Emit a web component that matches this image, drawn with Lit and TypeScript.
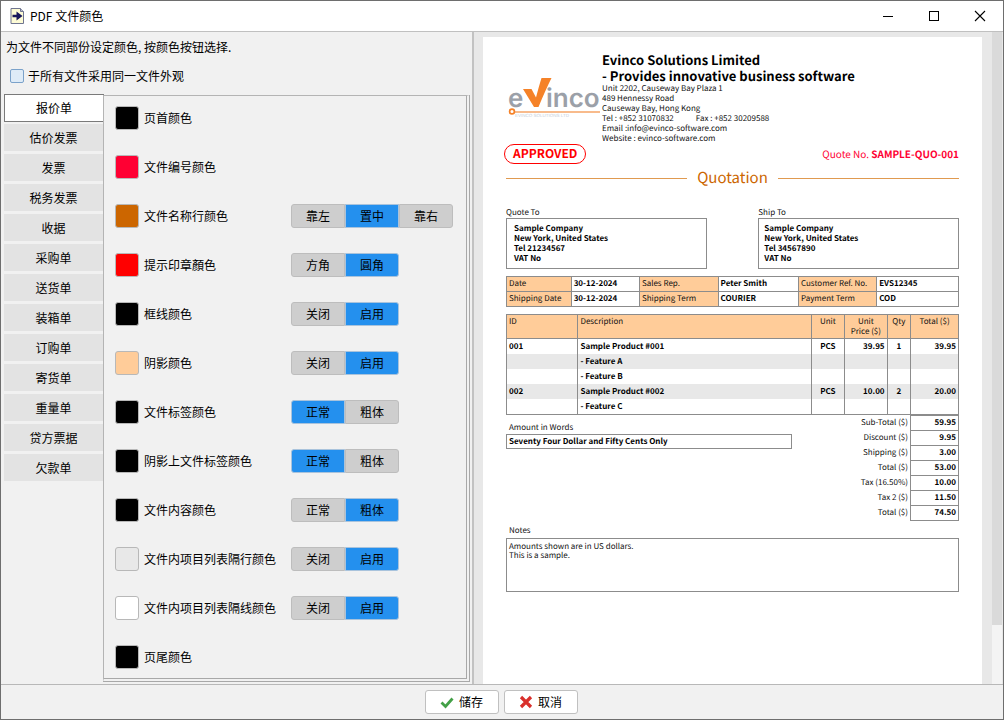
import { LitElement, html, css, svg } from "lit";
import { customElement, property, state } from "lit/decorators.js";

interface ColorRow {
  label: string;
  color: string;
  options?: string[];
  active?: number;
}

const DOCUMENT_TYPES = [
  "报价单", "估价发票", "发票", "税务发票", "收据", "采购单", "送货单",
  "装箱单", "订购单", "寄货单", "重量单", "贷方票据", "欠款单",
];

const COLOR_ROWS: ColorRow[] = [
  { label: "页首颜色", color: "#000000" },
  { label: "文件编号颜色", color: "#ff0033" },
  { label: "文件名称行颜色", color: "#cc6600", options: ["靠左", "置中", "靠右"], active: 1 },
  { label: "提示印章顏色", color: "#ff0000", options: ["方角", "圓角"], active: 1 },
  { label: "框线颜色", color: "#000000", options: ["关闭", "启用"], active: 1 },
  { label: "阴影颜色", color: "#ffcc99", options: ["关闭", "启用"], active: 1 },
  { label: "文件标签颜色", color: "#000000", options: ["正常", "粗体"], active: 0 },
  { label: "阴影上文件标签颜色", color: "#000000", options: ["正常", "粗体"], active: 0 },
  { label: "文件内容颜色", color: "#000000", options: ["正常", "粗体"], active: 1 },
  { label: "文件内项目列表隔行颜色", color: "#e8e8e8", options: ["关闭", "启用"], active: 1 },
  { label: "文件内项目列表隔线颜色", color: "#ffffff", options: ["关闭", "启用"], active: 1 },
  { label: "页尾颜色", color: "#000000" },
];

const ITEMS = [
  ["001", "Sample Product #001", "PCS", "39.95", "1", "39.95"],
  ["", "- Feature A", "", "", "", ""],
  ["", "- Feature B", "", "", "", ""],
  ["002", "Sample Product #002", "PCS", "10.00", "2", "20.00"],
  ["", "- Feature C", "", "", "", ""],
];

const TOTALS = [
  ["Sub-Total ($)", "59.95"],
  ["Discount ($)", "9.95"],
  ["Shipping ($)", "3.00"],
  ["Total ($)", "53.00"],
  ["Tax (16.50%)", "10.00"],
  ["Tax 2 ($)", "11.50"],
  ["Total ($)", "74.50"],
];

@customElement("quotation-preview")
class QuotationPreview extends LitElement {
  static styles = css`
    :host {
      display: block;
      background: #fff;
      color: #111;
      font: 8px/10px "Noto Sans CJK SC", sans-serif;
      text-rendering: geometricPrecision;
      padding: 15px 23px 0;
    }
    .head { display: flex; }
    .logo { width: 93px; height: 42px; margin: 24px 1px 0 2px; flex: none; }
    .company { flex: 1; white-space: nowrap; }
    .company h1 { margin: 0; font-size: 13px; line-height: 16px; font-weight: 700; color: #000; }
    .company p { margin: 0; }
    .fax { margin-left: 22px; }
    .stamp-row { display: flex; justify-content: space-between; align-items: center; height: 20px; }
    .stamp {
      box-sizing: border-box; height: 20px; border: 1px solid #f00; border-radius: 10px;
      padding: 0 8px; margin-left: -2px; color: #f00; font-size: 12px; line-height: 18px; font-weight: 700;
    }
    .number { color: #ff0033; font-size: 10px; line-height: 20px; }
    .title {
      display: flex; align-items: center; gap: 10px; margin: 4px 0 0;
      color: #cc6600; font-size: 15px; line-height: 20px; font-weight: 400;
    }
    .title::before, .title::after { content: ""; flex: 1; height: 1px; background: #e09a50; }
    .parties { display: flex; justify-content: space-between; margin-top: 20px; }
    .party { width: 44.3%; }
    .party-box {
      border: 1px solid #8c8c8c; box-sizing: border-box; height: 51px; padding: 5px 7px;
      font-weight: 700; color: #000;
    }
    .party:last-child .party-box { padding-left: 5px; }
    table { width: 100%; border-collapse: collapse; table-layout: fixed; }
    td, th { padding: 0 2px; font-weight: 400; text-align: left; vertical-align: top; white-space: nowrap; }
    .info { margin-top: 7px; }
    .info th, .info td { border: 1px solid #8c8c8c; line-height: 14px; height: 14px; }
    .info th, .items thead { background: #ffcc99; }
    td { font-weight: 700; color: #000; }
    .items { margin-top: 7px; }
    .items th { height: 21px; padding-top: 2px; border: 1px solid #8c8c8c; }
    .items td { border: 0 solid #8c8c8c; border-width: 0 1px; line-height: 15px; height: 15px; }
    .items tbody { border-bottom: 1px solid #8c8c8c; }
    .items tbody tr:nth-child(even) { background: #e8e8e8; }
    .items .mid { text-align: center; }
    .items .num, .totals td, .totals th { text-align: right; }
    .wrap { white-space: normal; }
    .summary { display: flex; justify-content: space-between; }
    .words { width: 63.2%; padding-top: 8px; }
    .caption { padding-left: 3px; }
    .words-box {
      border: 1px solid #8c8c8c; box-sizing: border-box; height: 15px; margin-top: 1px;
      padding-left: 2px; line-height: 13px; font-weight: 700; color: #000;
    }
    .totals { width: 30%; }
    .totals th, .totals td { line-height: 14px; height: 14px; }
    .totals td { border: 1px solid #8c8c8c; }
    .totals tr:first-child td { border-top: 0; }
    .notes { margin-top: 5px; }
    .notes-box {
      border: 1px solid #8c8c8c; box-sizing: border-box; height: 54px; margin-top: 2px;
      padding: 3px 2px; line-height: 9px;
    }
    .w1 { width: 14.3%; } .w2 { width: 15.1%; } .w3 { width: 17.4%; } .w4 { width: 17.8%; } .w5 { width: 17.3%; }
    .c1 { width: 15.8%; } .c3 { width: 7.4%; } .c4 { width: 9.4%; } .c5 { width: 5.2%; } .c6 { width: 10.6%; }
    .t2 { width: 48px; }
  `;

  private logo() {
    return svg`
      <svg class="logo" viewBox="0 0 93 42" role="img" aria-label="evinco">
        <g fill="#9ba0a8" font-family="Inter" font-size="26" font-weight="600">
          <text x="0" y="31">e</text>
          <text x="38" y="31">inco</text>
        </g>
        <path d="M15 13 H23.500 L28 21.500 Q31 10 33.500 2 H43.500 Q37.500 14 30.500 31 H26 Z" fill="#f58228"/>
        <path d="M5 36 H92" stroke="#f6a566" stroke-width="1.500"/>
        <circle cx="4" cy="35.500" r="2.400" fill="#fff" stroke="#f58228" stroke-width="1.700"/>
        <text x="7" y="40.500" font-family="Liberation Sans" font-size="4.500" fill="#c6cfdb">EVINCO SOLUTIONS LTD</text>
      </svg>`;
  }

  render() {
    return html`
      <div class="head">
        ${this.logo()}
        <div class="company">
          <h1>Evinco Solutions Limited<br>- Provides innovative business software</h1>
          <p>Unit 2202, Causeway Bay Plaza 1</p>
          <p>489 Hennessy Road</p>
          <p>Causeway Bay, Hong Kong</p>
          <p>Tel : +852 31070832<span class="fax">Fax : +852 30209588</span></p>
          <p>Email :info@evinco-software.com</p>
          <p>Website : evinco-software.com</p>
        </div>
      </div>
      <div class="stamp-row">
        <span class="stamp">APPROVED</span>
        <span class="number">Quote No. <b>SAMPLE-QUO-001</b></span>
      </div>
      <h2 class="title">Quotation</h2>
      <div class="parties">
        <div class="party">
          Quote To
          <div class="party-box">Sample Company<br>New York, United States<br>Tel 21234567<br>VAT No</div>
        </div>
        <div class="party">
          Ship To
          <div class="party-box">Sample Company<br>New York, United States<br>Tel 34567890<br>VAT No</div>
        </div>
      </div>
      <table class="info">
        <colgroup><col class="w1"><col class="w2"><col class="w3"><col class="w4"><col class="w5"><col></colgroup>
        <tr><th>Date</th><td>30-12-2024</td><th>Sales Rep.</th><td>Peter Smith</td><th>Customer Ref. No.</th><td>EVS12345</td></tr>
        <tr><th>Shipping Date</th><td>30-12-2024</td><th>Shipping Term</th><td>COURIER</td><th>Payment Term</th><td>COD</td></tr>
      </table>
      <table class="items">
        <colgroup><col class="c1"><col><col class="c3"><col class="c4"><col class="c5"><col class="c6"></colgroup>
        <thead>
          <tr>
            <th>ID</th><th>Description</th><th class="mid">Unit</th>
            <th class="mid wrap">Unit<br>Price ($)</th><th class="mid">Qty</th><th class="mid">Total ($)</th>
          </tr>
        </thead>
        <tbody>
          ${ITEMS.map((r) => html`<tr>
            <td>${r[0]}</td><td>${r[1]}</td><td class="mid">${r[2]}</td>
            <td class="num">${r[3]}</td><td class="mid">${r[4]}</td><td class="num">${r[5]}</td>
          </tr>`)}
        </tbody>
      </table>
      <div class="summary">
        <div class="words">
          <div class="caption">Amount in Words</div>
          <div class="words-box">Seventy Four Dollar and Fifty Cents Only</div>
        </div>
        <table class="totals">
          <colgroup><col><col class="t2"></colgroup>
          ${TOTALS.map((r) => html`<tr><th scope="row">${r[0]}</th><td>${r[1]}</td></tr>`)}
        </table>
      </div>
      <div class="notes">
        <div class="caption">Notes</div>
        <div class="notes-box">Amounts shown are in US dollars.<br>This is a sample.</div>
      </div>
    `;
  }
}

@customElement("option-switch")
class OptionSwitch extends LitElement {
  @property({ attribute: false }) options: string[] = [];
  @property({ type: Number }) active = 0;

  static styles = css`
    :host { display: flex; }
    button {
      box-sizing: border-box; width: 54px; height: 24px; padding: 0; border: 1px solid #bdbdbd;
      background: #cecece; color: #000; font: 12px/22px "Noto Sans CJK SC", sans-serif;
    }
    button:first-child { border-radius: 3px 0 0 3px; }
    button:last-child { border-radius: 0 3px 3px 0; }
    .on { background: #2490ee; border-color: #a9c3dc; }
  `;

  render() {
    return this.options.map((o, i) => html`<button
      type="button"
      class=${i === this.active ? "on" : ""}
      aria-pressed=${i === this.active ? "true" : "false"}
      @click=${() => { this.active = i; }}>${o}</button>`);
  }
}

@customElement("app-root")
class AppRoot extends LitElement {
  @state() private selected = 0;

  static styles = css`
    :host {
      display: flex; flex-direction: column; box-sizing: border-box; height: 100vh;
      border: 1px solid #6e6e6e; background: #f1f1f1; color: #000; overflow: hidden;
      font: 12px/16px "Noto Sans CJK SC", sans-serif;
    }
    button { font: inherit; color: inherit; padding: 0; }
    .titlebar {
      display: flex; align-items: center; height: 30px; background: #fff;
      border-bottom: 1px solid #c0c0c0; flex: none;
    }
    .app-icon { width: 14px; height: 16px; margin: 0 6px 0 9px; }
    .caption { margin: 0; flex: 1; font-size: 12px; font-weight: 400; }
    .window-button { width: 46px; height: 30px; border: 0; background: none; display: grid; place-items: center; }
    .window-button svg { width: 12px; height: 12px; }
    .body { display: flex; flex: 1; min-height: 0; }
    .settings {
      box-sizing: border-box; width: 473px; flex: none; display: flex; flex-direction: column;
      padding: 7px 2px 2px 3px; border-right: 2px solid #c2c2c2;
    }
    .intro { margin: 0 2px; }
    .same { display: flex; align-items: center; gap: 4px; margin: 13px 6px 10px; }
    .same input {
      appearance: none; box-sizing: border-box; margin: 0; width: 14px; height: 14px;
      border: 1px solid #7ba2ca; border-radius: 2px; background: #deebf7;
    }
    .same input:checked { background: #2490ee; }
    .workspace { display: flex; flex: 1; min-height: 0; }
    .tabs { display: flex; flex-direction: column; gap: 2px; width: 99px; flex: none; }
    .tab { box-sizing: border-box; height: 28px; border: 1px solid #f1f1f1; border-width: 0 0 1px; background: #e3e3e3; }
    .tab[aria-selected="true"] { background: #fff; border: 1px solid #7a7a7a; width: 100px; }
    .panel {
      flex: 1; display: flex; flex-direction: column; gap: 25px; margin-top: 1px;
      border: 1px solid #b4b4b4; border-right: 4px double #a8a8a8; border-bottom: 4px double #a8a8a8;
      padding: 10px 0 0 11px;
    }
    .row { display: grid; grid-template-columns: 24px 142px 1fr; column-gap: 5px; align-items: center; height: 24px; }
    .swatch { width: 24px; height: 24px; border: 1px solid #b8b8b8; border-radius: 3px; }
    .preview { flex: 1; display: flex; min-width: 0; background: #e8e8e8; }
    .paper { flex: 1; min-width: 0; margin: 5px 10px 0 9px; }
    .scrollbar { width: 10px; background: #f4f4f4; flex: none; margin-right: 1px; }
    .thumb { height: 91%; background: #dadada; }
    .actions {
      display: flex; justify-content: center; gap: 5px; flex: none; padding: 5px 2px 5px 0;
      border-top: 1px solid #b8b8b8;
    }
    .action {
      box-sizing: border-box; width: 74px; height: 24px; display: flex; align-items: center; justify-content: center;
      gap: 5px; border: 1px solid #c0c0c0; border-radius: 3px; background: #fff;
    }
    .action svg { width: 14px; height: 14px; }
  `;

  render() {
    return html`
      <header class="titlebar">
        <svg class="app-icon" viewBox="0 0 14 16" aria-hidden="true">
          <path d="M1 .5 H10.500 L13.500 3.500 V15.500 H1 Z" fill="#fdfbd5" stroke="#6f7590"/>
          <path d="M10.500 .5 V3.500 H13.500" fill="#b9bccb" stroke="#6f7590"/>
          <path d="M2.500 6.800 H6.500 V3.500 L12.500 8 L6.500 12.500 V9.200 H2.500 Z" fill="#17175c"/>
        </svg>
        <h1 class="caption">PDF 文件颜色</h1>
        <button class="window-button" type="button" aria-label="最小化">
          <svg viewBox="0 0 12 12"><path d="M1 6.500 H11" stroke="#000" fill="none"/></svg>
        </button>
        <button class="window-button" type="button" aria-label="最大化">
          <svg viewBox="0 0 12 12"><rect x="1.500" y="1.500" width="9" height="9" stroke="#000" fill="none"/></svg>
        </button>
        <button class="window-button" type="button" aria-label="关闭窗口">
          <svg viewBox="0 0 12 12"><path d="M1 1 L11 11 M11 1 L1 11" stroke="#000" stroke-width="1.100" fill="none"/></svg>
        </button>
      </header>
      <div class="body">
        <section class="settings">
          <p class="intro">为文件不同部份设定颜色, 按颜色按钮选择.</p>
          <div class="same">
            <input type="checkbox" id="same">
            <label for="same">于所有文件采用同一文件外观</label>
          </div>
          <div class="workspace">
            <div class="tabs" role="tablist" aria-orientation="vertical">
              ${DOCUMENT_TYPES.map((t, i) => html`<button
                class="tab" type="button" role="tab"
                aria-selected=${i === this.selected ? "true" : "false"}
                @click=${() => { this.selected = i; }}>${t}</button>`)}
            </div>
            <div class="panel" role="tabpanel">
              ${COLOR_ROWS.map((r, i) => html`<div class="row">
                <button class="swatch" type="button" id=${`color-${i}`} style=${`background:${r.color}`}></button>
                <label for=${`color-${i}`}>${r.label}</label>
                ${r.options ? html`<option-switch .options=${r.options} .active=${r.active ?? 0}></option-switch>` : ""}
              </div>`)}
            </div>
          </div>
        </section>
        <section class="preview">
          <quotation-preview class="paper"></quotation-preview>
          <div class="scrollbar"><div class="thumb"></div></div>
        </section>
      </div>
      <footer class="actions">
        <button class="action" type="button">
          <svg viewBox="0 0 14 14" aria-hidden="true"><path d="M1.500 7.500 L5.500 11.500 L12.500 3.500" fill="none" stroke="#43a047" stroke-width="2.800"/></svg>
          储存
        </button>
        <button class="action" type="button">
          <svg viewBox="0 0 14 14" aria-hidden="true"><path d="M2 2 L12 12 M12 2 L2 12" fill="none" stroke="#d9302c" stroke-width="3.200"/></svg>
          取消
        </button>
      </footer>
    `;
  }
}
